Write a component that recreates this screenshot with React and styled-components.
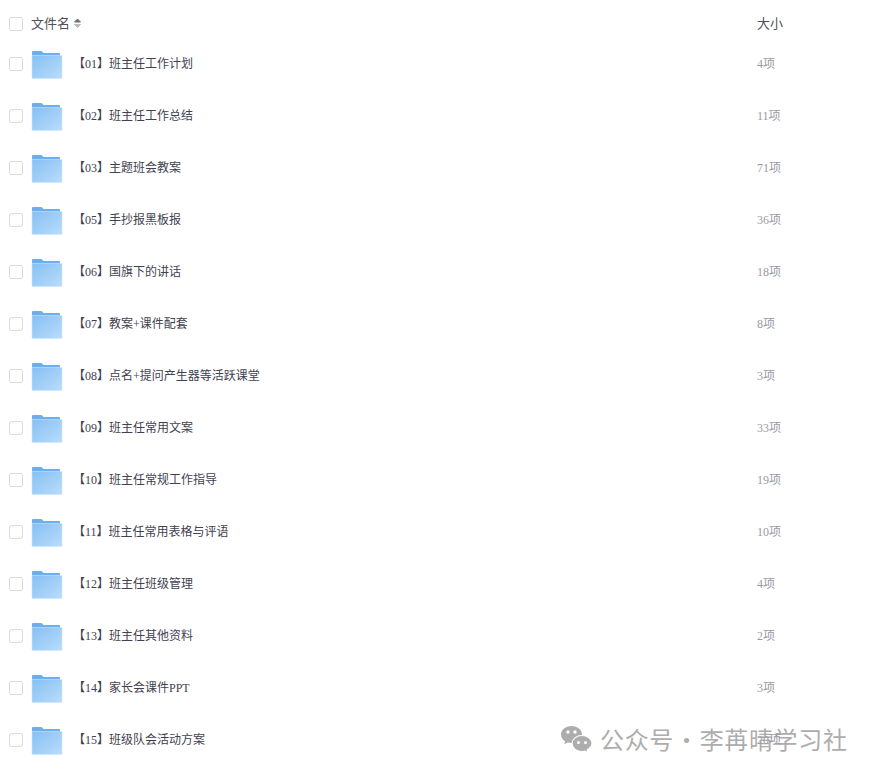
import React from 'react';
import styled, { createGlobalStyle } from 'styled-components';

const Global = createGlobalStyle`
  html, body { margin: 0; padding: 0; background: #fff; }
  body { overflow: hidden; font-family: "Liberation Serif", "Noto Sans CJK SC", serif; }
`;
const Page = styled.div`
  position: relative;
  z-index: 0;
  width: 876px;
  height: 774px;
  overflow: hidden;
  background: #fff;
`;
const Row = styled.div`
  display: grid;
  grid-template-columns: 22px 42px 684px 1fr;
  align-items: center;
  height: 52px;
  padding-left: 9px;
`;
const HeaderRow = styled.div`
  display: grid;
  grid-template-columns: 22px 726px 1fr;
  align-items: center;
  height: 29px;
  padding: 9px 0 0 9px;
`;
const Check = styled.span`
  display: block;
  width: 12px;
  height: 12px;
  border: 1px solid #dcdcdc;
  border-radius: 2px;
  background: #fff;
`;
const HeadCell = styled.div`
  display: flex;
  align-items: center;
  gap: 3px;
  padding-bottom: 2px;
  font: 13px "Noto Sans CJK SC", sans-serif;
  color: #50505c;
`;
const FileName = styled.div`
  padding-bottom: 2px;
  font-size: 12px;
  color: #3f4250;
  white-space: nowrap;
`;
const Size = styled.div`
  padding-bottom: 2px;
  font-size: 12px;
  color: #9a9aa3;
`;
const Watermark = styled.div`
  position: absolute;
  z-index: -1;
  left: 560px;
  top: 724px;
  display: flex;
  align-items: center;
  gap: 7px;
  color: #adadad;
  font: 24px/30px "Noto Sans CJK SC", sans-serif;
  letter-spacing: 0.65px;
  word-spacing: -5.5px;
  white-space: nowrap;
`;

const SortIcon = () => (
  <svg width="9" height="12" viewBox="0 0 9 12">
    <path d="M4.500 2 L7.500 5 H1.500 Z" fill="#707070" stroke="#707070" strokeWidth="1" strokeLinejoin="round" />
    <path d="M4.500 10.500 L7.500 7.500 H1.500 Z" fill="#bdbdbd" stroke="#bdbdbd" strokeWidth="1" strokeLinejoin="round" />
  </svg>
);
const Folder = () => (
  <svg width="32" height="29" viewBox="0 0 32 29">
    <defs>
      <linearGradient id="fg" x1="0" y1="0" x2="1" y2="1">
        <stop offset="0" stopColor="#86c0f4" />
        <stop offset="1" stopColor="#b9dcfb" />
      </linearGradient>
    </defs>
    <path d="M1 2 Q1 1 2 1 H10.500 L12.500 3 H28.500 Q29 3 29 3.500 V10 H1 Z" fill="#6ab0ee" />
    <path d="M1 5.500 H30.500 Q31 5.500 31 6 V28 Q31 28.500 30.500 28.500 H1.500 Q1 28.500 1 28 Z" fill="url(#fg)" stroke="#cfe6fb" strokeWidth="0.6" />
    <rect x="23" y="10.500" width="4" height="1.500" fill="#9ccbf5" />
  </svg>
);
const WeChat = () => (
  <svg width="33" height="28" viewBox="0 0 33 28">
    <path d="M11.500 1C5.700 1 1 4.800 1 9.500c0 2.800 1.600 5.200 4.100 6.800L4.200 19.300l3.600-1.800c1.100.3 2.400.5 3.700.5 5.800 0 10.500-3.800 10.500-8.500S17.300 1 11.500 1z" fill="#adadad" />
    <circle cx="8" cy="7" r="1.700" fill="#fff" />
    <circle cx="15" cy="7" r="1.700" fill="#fff" />
    <path d="M22 10.500c-5.500 0-10 3.600-10 8s4.500 8 10 8c1 0 2-.1 2.900-.4l3 1.700-.6-3c2.300-1.400 4.700-3.500 4.700-6.300 0-4.400-4.500-8-10-8z" fill="#adadad" stroke="#fff" strokeWidth="1.200" />
    <circle cx="18.500" cy="17.500" r="1.500" fill="#fff" />
    <circle cx="25.500" cy="17.500" r="1.500" fill="#fff" />
  </svg>
);

const files = [
  ['【01】班主任工作计划', '4项'],
  ['【02】班主任工作总结', '11项'],
  ['【03】主题班会教案', '71项'],
  ['【05】手抄报黑板报', '36项'],
  ['【06】国旗下的讲话', '18项'],
  ['【07】教案+课件配套', '8项'],
  ['【08】点名+提问产生器等活跃课堂', '3项'],
  ['【09】班主任常用文案', '33项'],
  ['【10】班主任常规工作指导', '19项'],
  ['【11】班主任常用表格与评语', '10项'],
  ['【12】班主任班级管理', '4项'],
  ['【13】班主任其他资料', '2项'],
  ['【14】家长会课件PPT', '3项'],
  ['【15】班级队会活动方案', '20项'],
];

export default function App() {
  return (
    <Page>
      <Global />
      <HeaderRow>
        <Check />
        <HeadCell>文件名<SortIcon /></HeadCell>
        <HeadCell>大小</HeadCell>
      </HeaderRow>
      {files.map(([name, size]) => (
        <Row key={name}>
          <Check />
          <Folder />
          <FileName>{name}</FileName>
          <Size>{size}</Size>
        </Row>
      ))}
      <Watermark><WeChat /><span>公众号 · 李苒晴学习社</span></Watermark>
    </Page>
  );
}
